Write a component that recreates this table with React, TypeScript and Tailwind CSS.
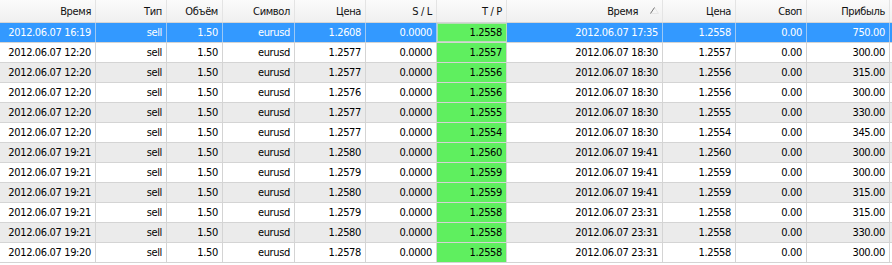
const columns = [
  { title: "Время", w: "w-[96px]" },
  { title: "Тип", w: "w-[71px]" },
  { title: "Объём", w: "w-[56px]" },
  { title: "Символ", w: "w-[72px]" },
  { title: "Цена", w: "w-[71px]" },
  { title: "S / L", w: "w-[71px]" },
  { title: "T / P", w: "w-[70px]" },
  { title: "Время", w: "w-[156px]", sorted: true },
  { title: "Цена", w: "w-[73px]" },
  { title: "Своп", w: "w-[71px]" },
  { title: "Прибыль", w: "w-[83px]" },
];

const rows = [
  ["16:19", "1.2608", "1.2558", "17:35", "750.00"],
  ["12:20", "1.2577", "1.2557", "18:30", "300.00"],
  ["12:20", "1.2577", "1.2556", "18:30", "315.00"],
  ["12:20", "1.2576", "1.2556", "18:30", "300.00"],
  ["12:20", "1.2577", "1.2555", "18:30", "330.00"],
  ["12:20", "1.2577", "1.2554", "18:30", "345.00"],
  ["19:21", "1.2580", "1.2560", "19:41", "300.00"],
  ["19:21", "1.2579", "1.2559", "19:41", "300.00"],
  ["19:21", "1.2580", "1.2559", "19:41", "315.00"],
  ["19:21", "1.2579", "1.2558", "23:31", "315.00"],
  ["19:21", "1.2580", "1.2558", "23:31", "330.00"],
  ["19:20", "1.2578", "1.2558", "23:31", "300.00"],
];

function SortArrow() {
  return (
    <svg width="9" height="7" viewBox="0 0 9 7" className="ml-[12px] -mr-[1px] mb-[1px]">
      <path d="M4.5 0.5 L8.5 6.5 L0.5 6.5 Z" fill="none" stroke="#e6e6e6" />
      <path d="M4.5 0.5 L0.5 6.5" stroke="#7a7a7a" />
    </svg>
  );
}

export default function App() {
  return (
    <div
      className="w-[892px] h-[265px] bg-white overflow-hidden text-[11px] leading-none tracking-[-0.35px] text-black"
      style={{ fontFamily: '"DejaVu Sans Condensed", "DejaVu Sans", sans-serif' }}
    >
      {/* Header */}
      <div className="flex h-[23px] border-b border-[#d5d5d5] bg-gradient-to-b from-[#fbfbfb] to-[#f0f0f0]">
        {columns.map((c, i) => (
          <div
            key={i}
            className={`${c.w} shrink-0 flex items-center justify-end pr-[4px] border-r border-[#e4e4e4] text-[#111]`}
          >
            {c.title}
            {c.sorted && <SortArrow />}
          </div>
        ))}
      </div>

      {/* Rows */}
      {rows.map((r, idx) => {
        const selected = idx === 0;
        const gray = idx % 2 === 0 && !selected;
        const values = [
          `2012.06.07 ${r[0]}`,
          "sell",
          "1.50",
          "eurusd",
          r[1],
          "0.0000",
          r[2],
          `2012.06.07 ${r[3]}`,
          r[2],
          "0.00",
          r[4],
        ];
        return (
          <div
            key={idx}
            className={`flex h-[20px] border-b border-[#d4d4d4] ${
              selected ? "bg-[#3399ff] text-white" : gray ? "bg-[#ebebeb]" : "bg-white"
            }`}
          >
            {values.map((v, i) => {
              const tp = i === 6;
              return (
                <div
                  key={i}
                  className={`${columns[i].w} shrink-0 flex items-center justify-end pr-[4px] border-r ${
                    selected ? "border-[#9cc8f5]" : "border-[#d4d4d4]"
                  } ${tp ? "bg-[#5fef5f] text-black" : ""} ${
                    tp && selected ? "outline outline-1 -outline-offset-1 outline-[#b8dcb8]" : ""
                  }`}
                >
                  {v}
                </div>
              );
            })}
          </div>
        );
      })}
    </div>
  );
}
